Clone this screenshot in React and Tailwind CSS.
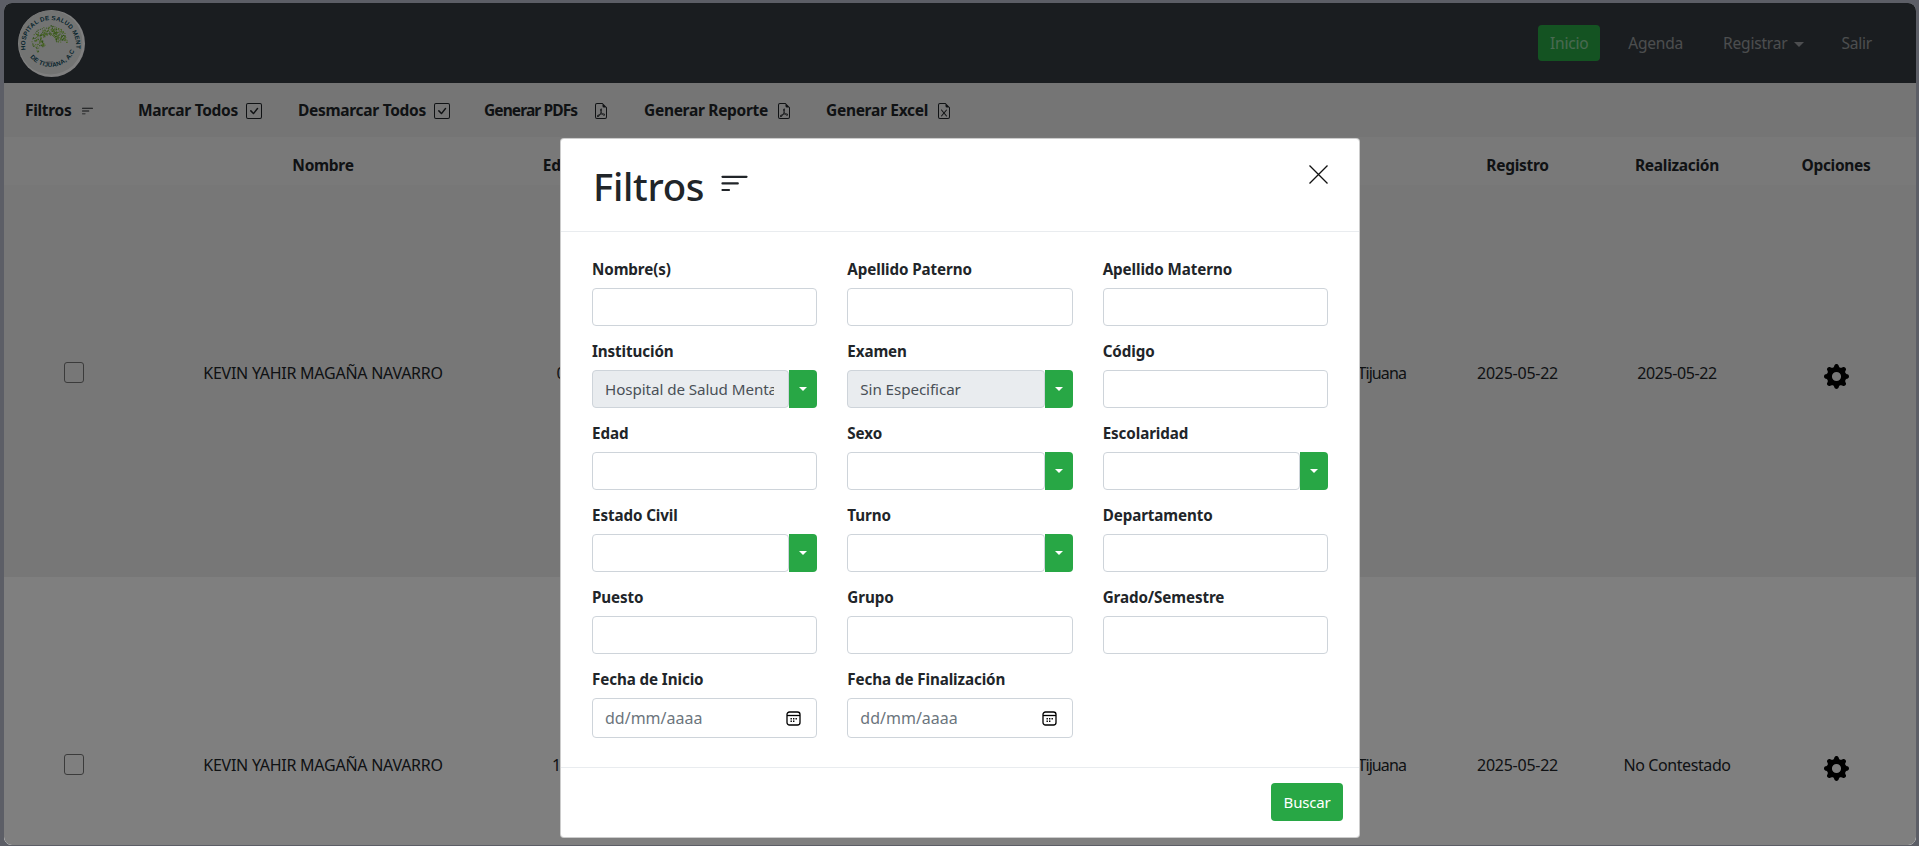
import React from "react";
import { BsCheckSquare, BsFileEarmarkPdf, BsFileEarmarkExcel, BsFilterLeft, BsGearFill } from "react-icons/bs";

const FONT = "font-['Noto_Sans','Open_Sans',sans-serif]";

function Logo() {
  const dots = [];
  let s = 7;
  const rnd = () => { s = (s * 16807) % 2147483647; return s / 2147483647; };
  for (let i = 0; i < 260; i++) {
    const a = Math.PI * (0.74 + rnd() * 1.3);
    const r = 6 + rnd() * 10.5;
    dots.push(
      <circle key={i} cx={33.5 + Math.cos(a) * r * 1.08} cy={33 + Math.sin(a) * r * 0.95} r={0.6} fill={i % 3 ? "#8cc63f" : "#5d9e32"} />
    );
  }
  return (
    <svg width="70" height="70" viewBox="0 0 70 70" className="block">
      <defs>
        <path id="logoTop" d="M 9.5 42 A 25.5 25.5 0 1 1 60 40" />
        <path id="logoBot" d="M 11 44 A 26 26 0 0 0 58 44" />
      </defs>
      <circle cx="35.5" cy="35.5" r="33.5" fill="#ffffff" />
      <circle cx="34.5" cy="34.5" r="32" fill="#e6e8e6" />
      {dots}
      <text className="font-['Liberation_Sans',sans-serif]" fontSize="6.2" fontWeight="700" fill="#0f4a5c" letterSpacing="0.2">
        <textPath href="#logoTop">HOSPITAL DE SALUD MENTAL</textPath>
      </text>
      <text className="font-['Liberation_Sans',sans-serif]" fontSize="6.2" fontWeight="700" fill="#0f4a5c" letterSpacing="0.2">
        <textPath href="#logoBot" startOffset="6">DE TIJUANA, A.C.</textPath>
      </text>
      <text x="33" y="56" fontSize="3" textAnchor="middle" fill="#777" className="font-['Liberation_Sans',sans-serif]">HSMT</text>
    </svg>
  );
}

function ToolItem({ w, label, icon, labelCls = "tracking-[-0.3px]" }) {
  return (
    <div className={`${w} flex items-center shrink-0`}>
      <span className={`text-[15.5px] font-bold text-[#212529] whitespace-nowrap ${labelCls}`}>{label}</span>
      {icon}
    </div>
  );
}

const GRID = "grid grid-cols-[140px_358px_118px_510px_320px_135px_184px_134px] pr-[13px]";

function Row({ bg, age, date2 }) {
  return (
    <div className={`${GRID} h-[392px] items-center ${bg} text-[16px] tracking-[-0.25px] text-[#212529]`}>
      <div className="flex justify-center pb-[18px]">
        <span className="block w-5 h-[21px] rounded-[3px] border border-[#767676] bg-white/0" />
      </div>
      <div className="text-center pb-[16px]">KEVIN YAHIR MAGAÑA NAVARRO</div>
      <div className="text-center pb-[16px]">{age}</div>
      <div className="text-center pb-[16px]">Sin Especificar</div>
      <div className="text-right pr-[44px] pb-[16px] whitespace-nowrap tracking-[-0.9px]">Hospital de Salud Mental de Tijuana</div>
      <div className="text-center pb-[16px]">2025-05-22</div>
      <div className="text-center pb-[16px] tracking-[-0.4px]">{date2}</div>
      <div className="flex justify-center pb-[9px]">
        <BsGearFill className="text-black w-[25px] h-[25px]" />
      </div>
    </div>
  );
}

function Label({ children }) {
  return <label className="block h-[24px] mb-[8px] leading-[26px] text-[15.2px] font-bold text-[#212529] tracking-[-0.1px] whitespace-nowrap">{children}</label>;
}

const inputBase = "block w-full h-[38px] rounded-[4px] border border-[#ced4da] bg-white text-[15px] text-[#495057] outline-none";

function TextField({ label }) {
  return (
    <div>
      <Label>{label}</Label>
      <input type="text" readOnly className={`${inputBase} px-3`} />
    </div>
  );
}

function SelectField({ label, value = "", disabled = false }) {
  return (
    <div>
      <Label>{label}</Label>
      <div className="flex h-[38px]">
        <input
          type="text"
          readOnly
          value={value}
          className={`block min-w-0 flex-1 h-[38px] rounded-[4px] border border-[#ced4da] ${disabled ? "bg-[#e9ecef]" : "bg-white"} pl-3 pr-[14px] text-[15.2px] tracking-[-0.08px] text-[#495057] outline-none`}
        />
        <button className="w-[28px] h-[38px] bg-[#28a745] rounded-r-[4px] flex items-center justify-center">
          <span className="block w-0 h-0 border-x-[4px] border-x-transparent border-t-[4px] border-t-white" />
        </button>
      </div>
    </div>
  );
}

function CalendarIcon() {
  return (
    <svg width="15" height="15" viewBox="0 0 15 15" fill="none" className="block">
      <rect x="1" y="1" width="13" height="13" rx="2.5" stroke="#000" strokeWidth="1.3" />
      <path d="M1 4.5h13" stroke="#000" strokeWidth="1.3" />
      <path d="M4.5 7.7h1.4M7 7.7h1.4M9.5 7.7h1.4M4.5 10.2h1.4M7 10.2h1.4" stroke="#000" strokeWidth="1.4" />
    </svg>
  );
}

function DateField({ label }) {
  return (
    <div>
      <Label>{label}</Label>
      <div className="flex items-center justify-between h-[40px] rounded-[4px] border border-[#ced4da] bg-white pl-[12px] pr-[15px] text-[16px] text-[#6c757d]">
        <span>dd/mm/aaaa</span>
        <CalendarIcon />
      </div>
    </div>
  );
}

export default function App() {
  return (
    <div className={`${FONT} w-full h-[846px] bg-[#5c5e66] pt-[3px] pl-[4px] pr-[3px] pb-px overflow-hidden`}>
      <div className="relative w-full h-full bg-white rounded-[8px] overflow-hidden">
        <nav className="h-[80px] bg-[#343a40] flex items-center justify-between pl-[12px] pr-[44px]">
          <Logo />
          <div className="flex items-center text-[15.5px] text-white/50 tracking-[-0.2px]">
            <a className="h-[36px] w-[62px] pt-[2px] flex items-center justify-center rounded-[4px] bg-[#28a745]">Inicio</a>
            <a className="h-[36px] pt-[2px] ml-[28px] flex items-center">Agenda</a>
            <a className="h-[36px] pt-[2px] ml-[40px] flex items-center">
              Registrar
              <span className="ml-[7px] w-0 h-0 border-x-[5px] border-x-transparent border-t-[5px] border-t-white/50" />
            </a>
            <a className="h-[36px] pt-[2px] ml-[37px] flex items-center">Salir</a>
          </div>
        </nav>

        <div className="h-[54px] bg-[#eaeaea] flex items-center pl-[21px] pt-[2px]">
          <ToolItem w="w-[113px]" label="Filtros" icon={<BsFilterLeft className="ml-[9px] w-[15px] h-[15px] text-[#212529]" />} />
          <ToolItem w="w-[160px]" label="Marcar Todos" icon={<BsCheckSquare className="ml-[8px] w-4 h-4 text-[#212529]" />} />
          <ToolItem w="w-[186px]" label="Desmarcar Todos" icon={<BsCheckSquare className="ml-[8px] w-4 h-4 text-[#212529]" />} />
          <ToolItem w="w-[160px]" label="Generar PDFs" labelCls="tracking-[-0.9px]" icon={<BsFileEarmarkPdf className="ml-[16px] w-[16px] h-[16px] text-[#212529]" />} />
          <ToolItem w="w-[182px]" label="Generar Reporte" icon={<BsFileEarmarkPdf className="ml-[8px] w-[16px] h-[16px] text-[#212529]" />} />
          <ToolItem w="w-[150px]" label="Generar Excel" icon={<BsFileEarmarkExcel className="ml-[8px] w-[16px] h-[16px] text-[#212529]" />} />
        </div>

        <div className={`${GRID} h-[48px] items-center bg-[#f3f3f3] text-[15.5px] font-bold tracking-[-0.3px] text-[#212529] pt-[10px]`}>
          <div />
          <div className="text-center">Nombre</div>
          <div className="text-center">Edad</div>
          <div className="text-center">Examen</div>
          <div className="text-center">Institución</div>
          <div className="text-center">Registro</div>
          <div className="text-center">Realización</div>
          <div className="text-center">Opciones</div>
        </div>

        <Row bg="bg-[#eeeeee]" age="0" date2="2025-05-22" />
        <Row bg="bg-white" age="18" date2="No Contestado" />

        <div className="absolute inset-0 bg-black/50">
          <div className="absolute left-[556px] top-[135px] w-[800px] h-[700px] bg-white rounded-[4px] border border-black/20 flex flex-col">
            <div className="h-[93px] shrink-0 border-b border-[#e9ecef] flex items-start justify-between pl-[32px] pr-[31px]">
              <div className="flex items-center mt-[19px] text-[#212529]">
                <h1 className="text-[38.4px] leading-[56px] font-medium tracking-[-0.3px]">Filtros</h1>
                <BsFilterLeft className="ml-[13px] mb-[3px] w-[35px] h-[35px]" />
              </div>
              <button className="mt-[26px] text-[#212529]">
                <svg width="19" height="19" viewBox="0 0 19 19" className="block" stroke="#111" strokeWidth="1.3" fill="none">
                  <path d="M0.5 0.5 L18.5 18.5 M18.5 0.5 L0.5 18.5" />
                </svg>
              </button>
            </div>

            <div className="flex-1 grid grid-cols-3 gap-x-[30px] gap-y-[12px] content-start pl-[31px] pr-[31px] pt-[24px]">
              <TextField label="Nombre(s)" />
              <TextField label="Apellido Paterno" />
              <TextField label="Apellido Materno" />
              <SelectField label="Institución" value="Hospital de Salud Mental de Tijuana" disabled />
              <SelectField label="Examen" value="Sin Especificar" disabled />
              <TextField label="Código" />
              <TextField label="Edad" />
              <SelectField label="Sexo" />
              <SelectField label="Escolaridad" />
              <SelectField label="Estado Civil" />
              <SelectField label="Turno" />
              <TextField label="Departamento" />
              <TextField label="Puesto" />
              <TextField label="Grupo" />
              <TextField label="Grado/Semestre" />
              <DateField label="Fecha de Inicio" />
              <DateField label="Fecha de Finalización" />
            </div>

            <div className="h-[70px] shrink-0 border-t border-[#e9ecef] flex justify-end items-start pt-[15px] pr-[16px]">
              <button className="w-[72px] h-[38px] bg-[#28a745] rounded-[4px] text-white text-[15px] tracking-[-0.2px]">Buscar</button>
            </div>
          </div>
        </div>
      </div>
    </div>
  );
}
